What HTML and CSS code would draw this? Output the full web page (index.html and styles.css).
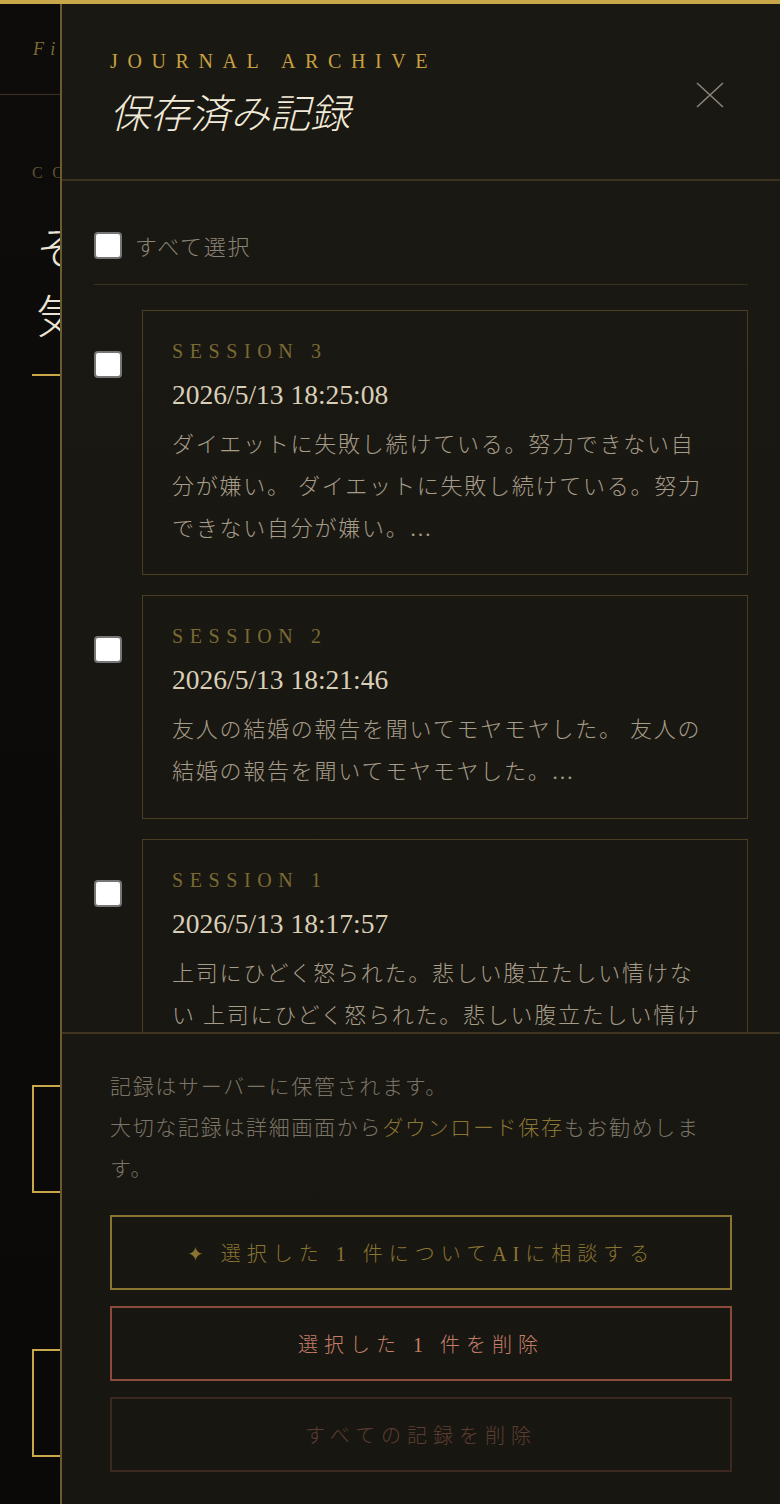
FILE: index.html
```html
<!DOCTYPE html>
<html lang="ja">
<head>
<meta charset="utf-8">
<title>保存済み記録</title>
<link rel="stylesheet" href="styles.css">
</head>
<body>
<div class="app">
  <header class="app-header">
    <span class="brand">First Light Journal</span>
  </header>
  <main class="app-main">
    <p class="eyebrow">CONVERSATION</p>
    <h1 class="hero">その日の心を、<br>気持ちのままに。</h1>
    <div class="hero-rule"></div>
    <div class="options">
      <div class="option-card"><span class="option-text">新しいセッションを始める</span></div>
      <div class="option-card"><span class="option-text">保存済みの記録を見る</span></div>
    </div>
  </main>
</div>

<aside class="drawer">
  <header class="drawer-header">
    <div class="drawer-heading">
      <p class="kicker">JOURNAL ARCHIVE</p>
      <h2 class="title">保存済み記録</h2>
    </div>
    <button class="close" aria-label="閉じる">
      <svg width="28" height="26" viewBox="0 0 28 26"><path d="M1 1 L27 25 M27 1 L1 25" stroke="#8a8578" stroke-width="1.6" fill="none"/></svg>
    </button>
  </header>

  <div class="list">
    <div class="select-all">
      <input type="checkbox" class="check" id="select-all">
      <label class="select-text" for="select-all">すべて選択</label>
    </div>

    <div class="sessions">
      <div class="session-row">
        <input type="checkbox" class="check">
        <article class="card">
          <p class="card-label">SESSION 3</p>
          <p class="card-date">2026/5/13 18:25:08</p>
          <p class="card-text">ダイエットに失敗し続けている。努力できない自分が嫌い。 ダイエットに失敗し続けている。努力できない自分が嫌い。…</p>
        </article>
      </div>
      <div class="session-row">
        <input type="checkbox" class="check">
        <article class="card">
          <p class="card-label">SESSION 2</p>
          <p class="card-date">2026/5/13 18:21:46</p>
          <p class="card-text">友人の結婚の報告を聞いてモヤモヤした。 友人の結婚の報告を聞いてモヤモヤした。…</p>
        </article>
      </div>
      <div class="session-row">
        <input type="checkbox" class="check">
        <article class="card">
          <p class="card-label">SESSION 1</p>
          <p class="card-date">2026/5/13 18:17:57</p>
          <p class="card-text">上司にひどく怒られた。悲しい腹立たしい情けない 上司にひどく怒られた。悲しい腹立たしい情けない…</p>
        </article>
      </div>
    </div>
  </div>

  <footer class="drawer-footer">
    <div class="note">
      <p class="note-line">記録はサーバーに保管されます。</p>
      <p class="note-line">大切な記録は詳細画面から<em>ダウンロード保存</em>もお勧めします。</p>
    </div>
    <button class="btn btn-ai">✦ 選択した 1 件についてAIに相談する</button>
    <button class="btn btn-delete">選択した 1 件を削除</button>
    <button class="btn btn-delete-all">すべての記録を削除</button>
  </footer>
</aside>
</body>
</html>
```
FILE: styles.css
```css
html, body {
  margin: 0;
  padding: 0;
}

body {
  width: 780px;
  height: 1504px;
  overflow: hidden;
  background: #0b0a08;
  font-family: "Liberation Serif", "Noto Sans CJK JP", serif;
}

/* ---------- background app ---------- */
.app {
  border-top: 4px solid #c9a84c;
  min-height: 1500px;
  background: linear-gradient(180deg, #0d0c0a 0%, #0a0908 100%);
}

.app-header {
  box-sizing: border-box;
  height: 91px;
  border-bottom: 1px solid #3a3220;
  display: flex;
  align-items: center;
  padding: 0 33px;
}

.brand {
  font-style: italic;
  font-size: 18px;
  letter-spacing: 0.35em;
  color: #7a6a34;
}

.app-main {
  padding: 0 32px;
}

.eyebrow {
  margin: 68px 0 0;
  font-size: 16px;
  line-height: 20px;
  letter-spacing: 0.6em;
  color: #5e5030;
}

.hero {
  margin: 28px 0 0;
  padding-left: 4px;
  font-family: "Noto Sans CJK JP", sans-serif;
  font-weight: 300;
  font-size: 46px;
  line-height: 68px;
  color: #ece4d4;
}

.hero-rule {
  margin-top: 27px;
  width: 60px;
  height: 2px;
  background: #c9a84c;
}

.options {
  margin-top: 709px;
  display: flex;
  flex-direction: column;
  gap: 156px;
}

.option-card {
  box-sizing: border-box;
  height: 108px;
  border: 2px solid #c9a84c;
  display: flex;
  align-items: center;
  padding-left: 40px;
}

.option-text {
  font-family: "Noto Sans CJK JP", sans-serif;
  font-size: 20px;
  color: #c9a84c;
}

/* ---------- drawer ---------- */
.drawer {
  position: fixed;
  top: 4px;
  right: 0;
  bottom: 0;
  width: 718px;
  border-left: 2px solid #6b5a2e;
  background: linear-gradient(180deg, #1a1812 0%, #191711 60%, #181610 100%);
  display: flex;
  flex-direction: column;
}

.drawer-header {
  flex-shrink: 0;
  box-sizing: border-box;
  height: 177px;
  border-bottom: 2px solid #3b3320;
  padding: 45px 48px 0 48px;
  display: flex;
  justify-content: space-between;
  align-items: flex-start;
}

.kicker {
  margin: 0;
  font-size: 20px;
  line-height: 24px;
  letter-spacing: 0.48em;
  color: #c9a040;
}

.title {
  margin: 12px 0 0;
  font-family: "Noto Sans CJK JP", sans-serif;
  font-style: italic;
  font-weight: 300;
  font-size: 40px;
  line-height: 52px;
  color: #f2ead8;
}

.close {
  margin-top: 24px;
  width: 44px;
  height: 44px;
  padding: 0;
  border: 0;
  background: transparent;
  display: flex;
  align-items: center;
  justify-content: center;
}

.list {
  flex: 1;
  min-height: 0;
  overflow: hidden;
  padding: 51px 32px 0 32px;
}

.check {
  appearance: none;
  -webkit-appearance: none;
  flex-shrink: 0;
  box-sizing: border-box;
  width: 28px;
  height: 27px;
  margin: 0;
  background: #ffffff;
  border: 2px solid #767676;
  border-radius: 4px;
}

.select-all {
  display: flex;
  align-items: center;
  gap: 13px;
  padding-bottom: 25px;
  border-bottom: 1px solid #37301e;
}

.select-text {
  font-family: "Noto Sans CJK JP", sans-serif;
  font-weight: 300;
  font-size: 22px;
  line-height: 27px;
  letter-spacing: 0.08em;
  color: #8a8476;
}

.sessions {
  margin-top: 25px;
  display: flex;
  flex-direction: column;
  gap: 20px;
}

.session-row {
  display: flex;
  align-items: flex-start;
  gap: 20px;
}

.session-row .check {
  margin-top: 41px;
}

.card {
  flex: 1;
  min-width: 0;
  border: 1px solid #4a3f22;
  padding: 28px 32px 25px 29px;
}

.card-label {
  margin: 0;
  font-size: 20px;
  line-height: 25px;
  letter-spacing: 0.33em;
  color: #7a6a32;
}

.card-date {
  margin: 13px 0 0;
  font-size: 27.5px;
  line-height: 36px;
  color: #d9cfb8;
}

.card-text {
  margin: 11px 0 0;
  font-weight: 300;
  font-size: 22px;
  line-height: 41.8px;
  letter-spacing: 0.08em;
  color: #a59c89;
}

/* ---------- footer ---------- */
.drawer-footer {
  flex-shrink: 0;
  border-top: 2px solid #3f3520;
  padding: 33px 48px 32px;
}

.note {
  margin: 0 0 25px;
  font-weight: 300;
  font-size: 21px;
  line-height: 41px;
  letter-spacing: 0.08em;
  color: #7b7567;
}

.note-line {
  margin: 0;
}

.note em {
  font-style: normal;
  color: #8a7433;
}

.btn {
  display: block;
  box-sizing: border-box;
  width: 100%;
  height: 75px;
  padding: 0;
  background: transparent;
  border: 2px solid;
  font-family: "Liberation Serif", "Noto Sans CJK JP", serif;
  font-weight: 300;
  font-size: 20px;
  letter-spacing: 0.3em;
}

.btn + .btn {
  margin-top: 16px;
}

.btn-ai {
  border-color: #8a7432;
  color: #8a7432;
}

.btn-delete {
  border-color: #8b4a3b;
  color: #c47e6a;
}

.btn-delete-all {
  border-color: #3b2820;
  color: #5c3d32;
}
```
